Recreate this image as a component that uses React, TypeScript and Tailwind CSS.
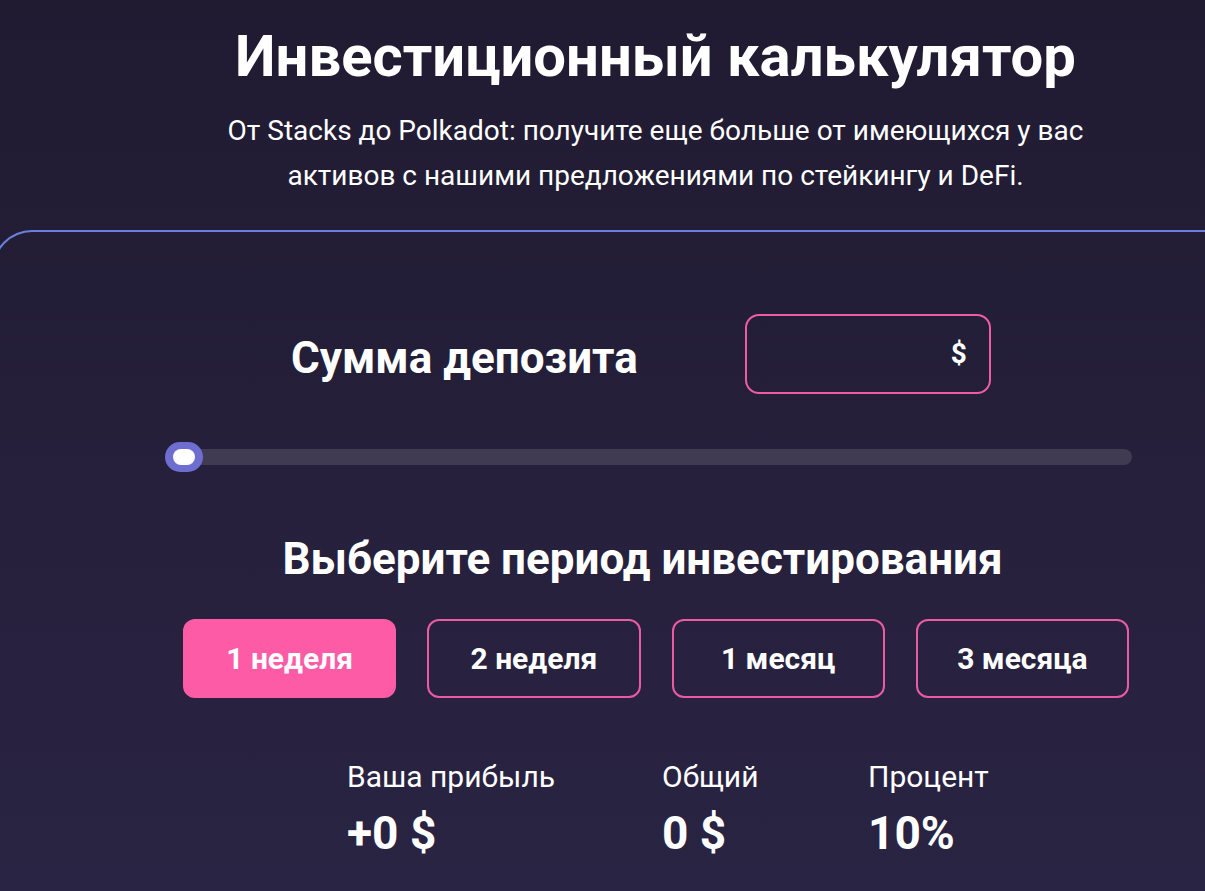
import React from "react";

export default function App() {
  const periods = ["1 неделя", "2 неделя", "1 месяц", "3 месяца"];
  return (
    <div
      className="min-h-[891px] w-full overflow-hidden bg-gradient-to-b from-[#201b31] to-[#2a2444] text-white"
      style={{ fontFamily: "Roboto, 'Noto Sans', sans-serif" }}
    >
      <header className="flex flex-col items-center pl-[106px] pt-[18px]">
        <h1 className="text-[58px] font-bold leading-[76px]">Инвестиционный калькулятор</h1>
        <p className="mt-[14px] whitespace-nowrap text-center text-[28px] leading-[45px]">
          От Stacks до Polkadot: получите еще больше от имеющихся у вас
          <br />
          активов с нашими предложениями по стейкингу и DeFi.
        </p>
      </header>

      <section className="mt-[32px] -ml-[8px] w-[1260px] rounded-tl-[40px] border-l-2 border-t-2 border-[#6b80dc] pb-[40px]">
        <div className="ml-[171px] w-[967px]">
          <div className="mt-[82px] flex items-center gap-[107px] pl-[126px]">
            <h2 className="pt-[8px] text-[44px] font-bold leading-none">Сумма депозита</h2>
            <div className="flex h-[80px] w-[246px] items-center justify-end rounded-[14px] border-2 border-[#f05ba7] pr-[22px]">
              <span className="text-[28px] font-bold">$</span>
            </div>
          </div>

          <div className="relative mt-[48px] h-[30px]">
            <div className="absolute left-[6px] right-0 top-[7px] h-[16px] rounded-full bg-[#403a53]" />
            <div className="absolute left-0 top-0 flex h-[30px] w-[38px] items-center justify-center rounded-full bg-[#6e6ed0]">
              <div className="h-[16px] w-[22px] rounded-full bg-white" />
            </div>
          </div>

          <h2 className="mt-[65px] pr-[12px] text-center text-[44px] font-bold leading-none">
            Выберите период инвестирования
          </h2>

          <div className="mt-[38px] grid grid-cols-4 gap-[31px] pl-[18px] pr-[3px]">
            {periods.map((p, i) => (
              <button
                key={p}
                className={
                  i === 0
                    ? "flex h-[79px] items-center justify-center rounded-[12px] bg-[#fd5ba6] text-[30px] font-bold text-white"
                    : "flex h-[79px] items-center justify-center rounded-[12px] border-2 border-[#eb5ba3] text-[30px] font-bold text-white"
                }
              >
                {p}
              </button>
            ))}
          </div>

          <div className="mt-[61px] flex pl-[182px]">
            <div className="w-[315px]">
              <div className="text-[30px] leading-[36px]">Ваша прибыль</div>
              <div className="mt-[10px] text-[46px] font-bold leading-[56px]">+0 $</div>
            </div>
            <div className="w-[206px]">
              <div className="text-[30px] leading-[36px]">Общий</div>
              <div className="mt-[10px] text-[46px] font-bold leading-[56px]">0 $</div>
            </div>
            <div>
              <div className="text-[30px] leading-[36px]">Процент</div>
              <div className="mt-[10px] text-[46px] font-bold leading-[56px]">10%</div>
            </div>
          </div>
        </div>
      </section>
    </div>
  );
}
